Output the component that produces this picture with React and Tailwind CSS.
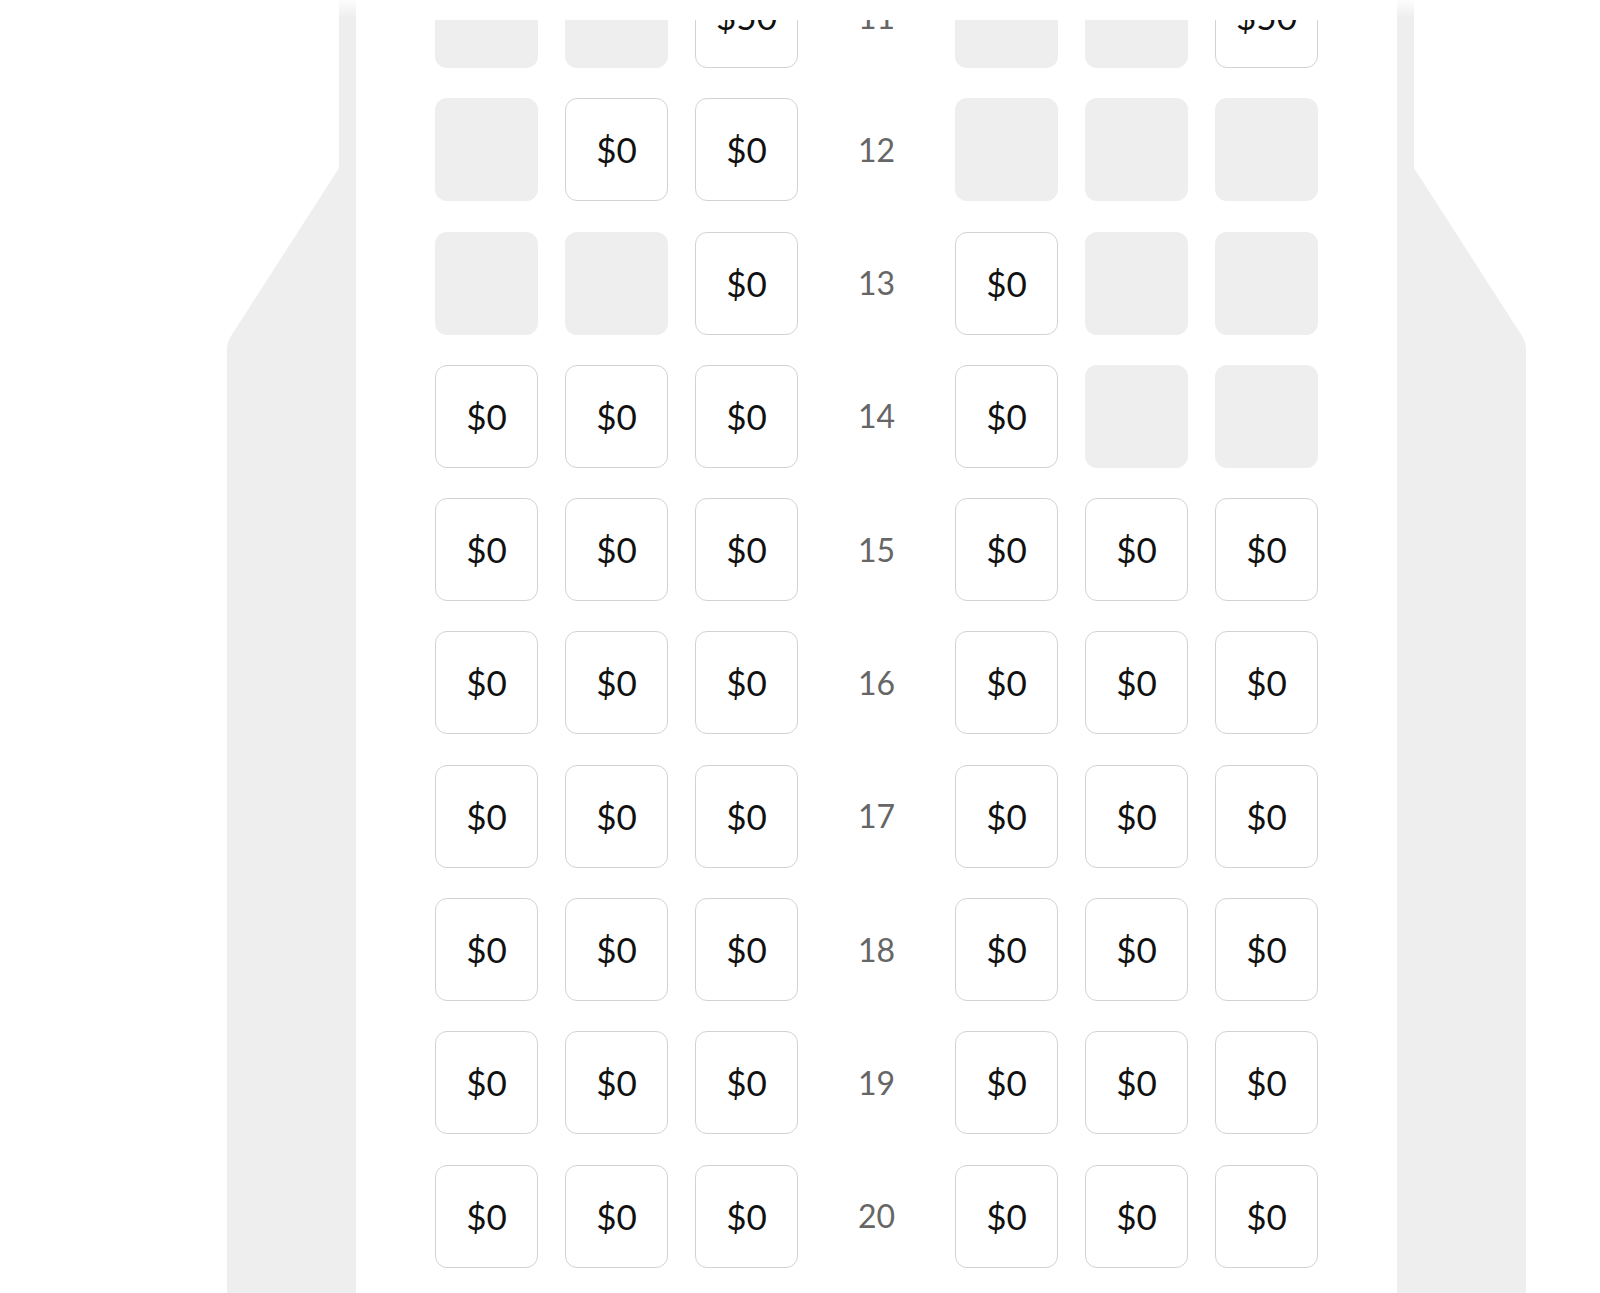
import React from 'react'

const rows = [
  [11, [null, null, '$50'], [null, null, '$50']],
  [12, [null, '$0', '$0'], [null, null, null]],
  [13, [null, null, '$0'], ['$0', null, null]],
  [14, ['$0', '$0', '$0'], ['$0', null, null]],
  ...[15, 16, 17, 18, 19, 20].map(n => [n, ['$0', '$0', '$0'], ['$0', '$0', '$0']]),
]

function Seat({ price }) {
  if (!price) return <div className="h-[103px] w-[103px] rounded-[12px] bg-[#eeeeee]" />
  return (
    <button className="flex h-[103px] w-[103px] items-center justify-center rounded-[12px] border-[1.5px] border-[#d2d2d2] bg-white text-[35px] leading-none text-[#111]">
      {price}
    </button>
  )
}

function Wing({ side }) {
  const d = side === 'left'
    ? 'M112 168 L4 336 Q0 342 0 350 L0 1293 L112 1293 Z'
    : 'M0 168 L108 336 Q112 342 112 350 L112 1293 L0 1293 Z'
  return (
    <div className="w-[112px] shrink-0">
      <svg width="112" height="1293" viewBox="0 0 112 1293">
        <path d={d} fill="#eeeeee" />
      </svg>
    </div>
  )
}

function Wall() {
  return (
    <div className="relative w-[17px] shrink-0 bg-[#eeeeee]">
      <div className="absolute inset-x-0 top-0 h-[18px] bg-gradient-to-b from-white/90 to-white/0" />
    </div>
  )
}

export default function App() {
  return (
    <div className="h-[1293px] w-full overflow-hidden bg-white font-['Lato','Noto_Sans',sans-serif]">
      <div className="flex h-full">
        <div className="w-[227px] shrink-0" />
        <Wing side="left" />
        <Wall />
        <div className="w-[1041px] shrink-0 pt-[20px]">
          <div className="h-full overflow-hidden">
            <div className="mt-[-55px] grid grid-cols-[repeat(7,103px)] gap-x-[27px] gap-y-[30.3px] pl-[79px]">
              {rows.map(([n, left, right]) => (
                <React.Fragment key={n}>
                  {left.map((p, i) => <Seat key={'l' + i} price={p} />)}
                  <div className="flex items-center justify-center text-[32px] leading-none text-[#666]">{n}</div>
                  {right.map((p, i) => <Seat key={'r' + i} price={p} />)}
                </React.Fragment>
              ))}
            </div>
          </div>
        </div>
        <Wall />
        <Wing side="right" />
      </div>
    </div>
  )
}
